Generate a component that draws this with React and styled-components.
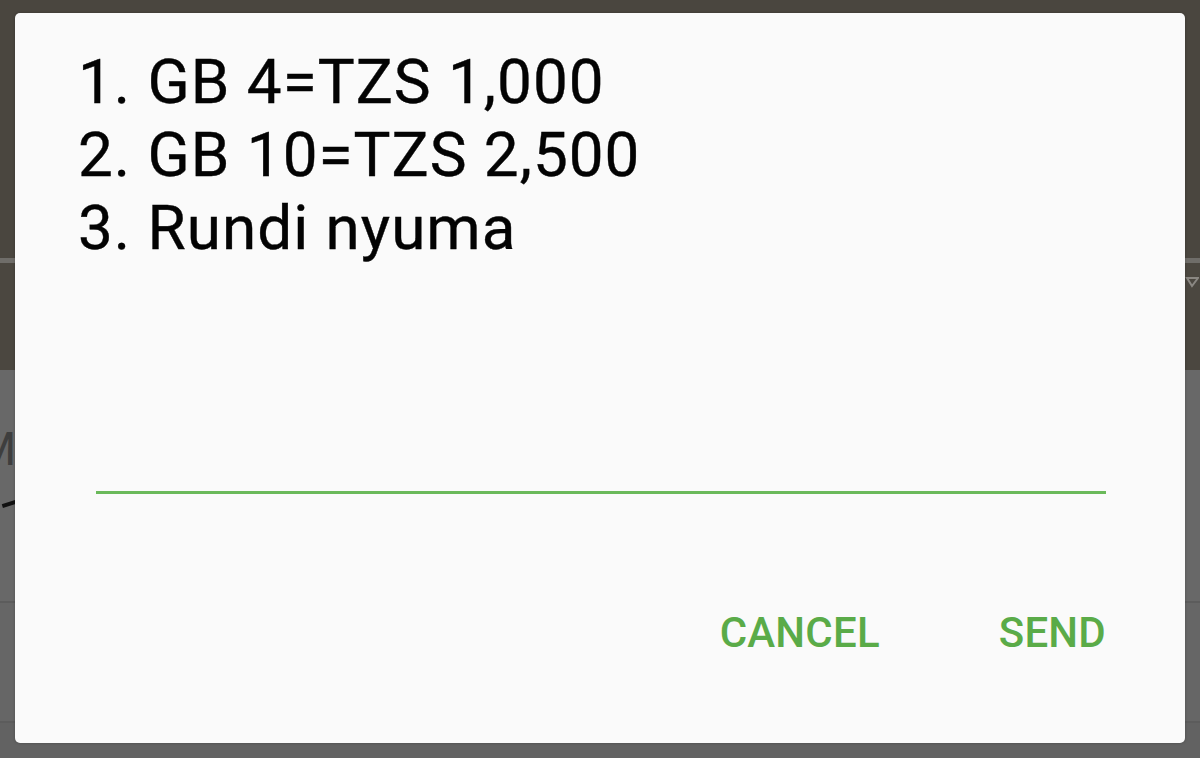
import React from "react";
import styled, { createGlobalStyle } from "styled-components";

const Global = createGlobalStyle`
  html, body { margin: 0; padding: 0; }
  body { width: 1200px; height: 758px; overflow: hidden; font-family: Roboto, "Noto Sans", sans-serif; }
  #root { width: 1200px; height: 758px; }
`;

const Screen = styled.div`
  position: relative;
  width: 1200px;
  height: 758px;
  display: flex;
  flex-direction: column;
  background: #666666;
  overflow: hidden;
`;

const AppBar = styled.div`
  height: 258px;
  background: #4a463f;
`;

const AppBarRule = styled.div`
  height: 5px;
  background: #6f6d69;
`;

const Toolbar = styled.div`
  height: 107px;
  background: #4b4740;
  display: flex;
  justify-content: flex-end;
  align-items: flex-start;
  padding-top: 12px;
  box-sizing: border-box;
`;

const Arrow = styled.svg`
  width: 14px;
  height: 14px;
  margin-right: 1px;
`;

const Row = styled.div`
  height: ${(p) => p.$h}px;
  background: ${(p) => p.$bg};
  border-bottom: ${(p) => (p.$rule ? "2px solid #5c5c5c" : "none")};
  display: flex;
  flex-direction: column;
  justify-content: flex-start;
  box-sizing: border-box;
  padding-top: ${(p) => p.$pt || 0}px;
`;

const Ghost = styled.div`
  font-family: Roboto, sans-serif;
  font-size: 46px;
  line-height: 46px;
  color: #3e3e3e;
  margin-left: -24px;
`;

const Stroke = styled.div`
  width: 14px;
  height: 4px;
  background: #111;
  margin-top: 30px;
  margin-left: 2px;
  transform: rotate(-18deg);
`;

const Dialog = styled.div`
  position: absolute;
  left: 15px;
  top: 13px;
  width: 1170px;
  height: 730px;
  background: #fafafa;
  border-radius: 5px;
  box-shadow: 0 0 3px rgba(0, 0, 0, 0.25);
  box-sizing: border-box;
  display: flex;
  flex-direction: column;
  padding: 32px 79px 0 63px;
`;

const Message = styled.div`
  font-family: Roboto, sans-serif;
  font-size: 62px;
  line-height: 73px;
  color: #030303;
  letter-spacing: 1px;
  -webkit-text-stroke: 0.4px #030303;
`;

const Line = styled.div`
  white-space: pre;
`;

const Field = styled.div`
  margin-top: 227px;
  margin-left: 18px;
  height: 3px;
  background: #6ab95a;
`;

const Actions = styled.div`
  display: flex;
  justify-content: flex-end;
  gap: 119px;
  margin-top: 115px;
`;

const ActionButton = styled.div`
  font-family: Roboto, sans-serif;
  font-weight: 500;
  font-size: 42px;
  line-height: 48px;
  letter-spacing: 0.2px;
  color: #5aab48;
  text-transform: uppercase;
`;

export default function App() {
  return (
    <>
      <Global />
      <Screen>
        <AppBar />
        <AppBarRule />
        <Toolbar>
          <Arrow viewBox="0 0 14 14">
            <path d="M2 3 L13 3 L7 11 Z" fill="none" stroke="#8a8782" strokeWidth="2" />
          </Arrow>
        </Toolbar>
        <Row $h={233} $bg="#686868" $rule $pt={56}>
          <Ghost>Me</Ghost>
          <Stroke />
        </Row>
        <Row $h={120} $bg="#666666" $rule />
        <Row $h={35} $bg="#626262" />
        <Dialog>
          <Message>
            <Line>1. GB 4=TZS 1,000</Line>
            <Line>2. GB 10=TZS 2,500</Line>
            <Line>3. Rundi nyuma</Line>
          </Message>
          <Field />
          <Actions>
            <ActionButton>Cancel</ActionButton>
            <ActionButton>Send</ActionButton>
          </Actions>
        </Dialog>
      </Screen>
    </>
  );
}
